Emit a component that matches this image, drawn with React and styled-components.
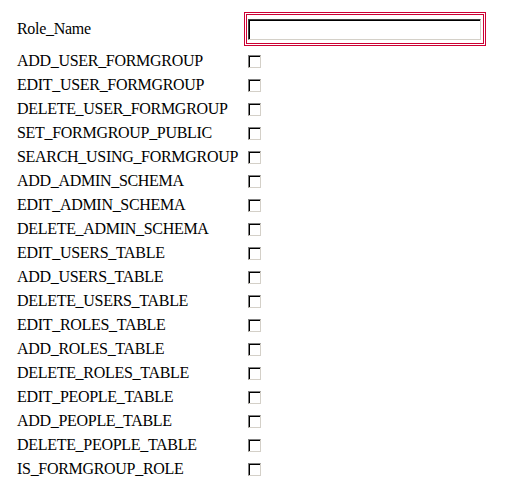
import React from "react";
import styled, { createGlobalStyle } from "styled-components";

const SERIF = `"Times New Roman", "Liberation Serif", Tinos, "DejaVu Serif", "Noto Serif", FreeSerif, Times, serif`;

const Global = createGlobalStyle`
  html, body { margin: 0; padding: 0; background: #fff; }
  body { font-family: ${SERIF}; font-size: 16px; color: #000; }
`;

const Form = styled.form`
  display: grid;
  grid-template-columns: 227px auto;
  justify-content: start;
  padding: 12px 0 0 17px;
  font-family: ${SERIF};
  font-size: 16px;
`;

const Label = styled.label`
  display: flex;
  align-items: center;
  height: ${(p) => (p.$tall ? "34px" : "24px")};
  margin-bottom: ${(p) => (p.$tall ? "3px" : "0")};
  white-space: nowrap;
  line-height: 1;
  letter-spacing: -0.3px;
`;

const Cell = styled.div`
  display: flex;
  align-items: center;
  height: ${(p) => (p.$tall ? "34px" : "24px")};
  margin-bottom: ${(p) => (p.$tall ? "3px" : "0")};
`;

const RedFrame = styled.div`
  box-sizing: border-box;
  width: 242px;
  height: 34px;
  border: 3px double #cc0033;
  padding: 4px 2px 3px 1px;
  display: flex;
`;

const TextInput = styled.input`
  box-sizing: border-box;
  width: 233px;
  height: 21px;
  margin: 0;
  padding: 1px 3px;
  border: 1px solid;
  border-color: #404040 #d4d0c8 #d4d0c8 #404040;
  box-shadow: inset 1px 1px 0 #000;
  background: #fff;
  outline: none;
  font: inherit;
`;

const Check = styled.input`
  appearance: none;
  -webkit-appearance: none;
  box-sizing: border-box;
  width: 13px;
  height: 13px;
  margin: 0 0 0 4px;
  border: 1px solid;
  border-color: #808080 #d4d0c8 #d4d0c8 #808080;
  box-shadow: inset 1px 1px 0 #000;
  background: #fff;
`;

const perms = [
  "ADD_USER_FORMGROUP",
  "EDIT_USER_FORMGROUP",
  "DELETE_USER_FORMGROUP",
  "SET_FORMGROUP_PUBLIC",
  "SEARCH_USING_FORMGROUP",
  "ADD_ADMIN_SCHEMA",
  "EDIT_ADMIN_SCHEMA",
  "DELETE_ADMIN_SCHEMA",
  "EDIT_USERS_TABLE",
  "ADD_USERS_TABLE",
  "DELETE_USERS_TABLE",
  "EDIT_ROLES_TABLE",
  "ADD_ROLES_TABLE",
  "DELETE_ROLES_TABLE",
  "EDIT_PEOPLE_TABLE",
  "ADD_PEOPLE_TABLE",
  "DELETE_PEOPLE_TABLE",
  "IS_FORMGROUP_ROLE",
];

export default function App() {
  return (
    <>
      <Global />
      <Form onSubmit={(e) => e.preventDefault()}>
        <Label $tall htmlFor="role_name">Role_Name</Label>
        <Cell $tall>
          <RedFrame>
            <TextInput id="role_name" type="text" />
          </RedFrame>
        </Cell>
        {perms.map((p) => (
          <React.Fragment key={p}>
            <Label htmlFor={p}>{p}</Label>
            <Cell>
              <Check type="checkbox" id={p} />
            </Cell>
          </React.Fragment>
        ))}
      </Form>
    </>
  );
}
